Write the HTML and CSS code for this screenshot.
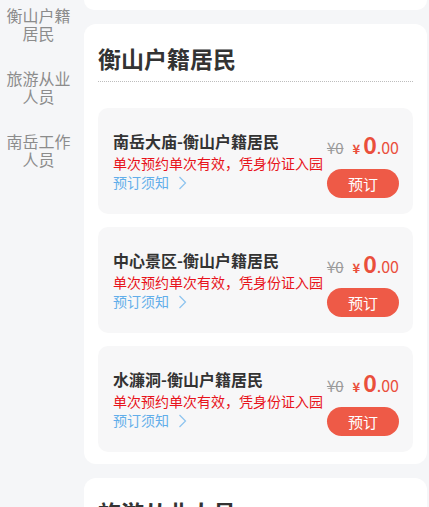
FILE: index.html
```html
<!DOCTYPE html>
<html lang="zh-CN">
<head>
    <meta charset="UTF-8">
    <meta name="viewport" content="width=device-width, initial-scale=1.0">
    <title>门票预约</title>
    <link rel="stylesheet" href="styles.css">
</head>
<body>
    <aside class="side">
        <div class="side-item">衡山户籍居民</div>
        <div class="side-item">旅游从业人员</div>
        <div class="side-item">南岳工作人员</div>
    </aside>

    <main class="main">
        <div class="group group-tail"></div>

        <section class="group">
            <h2 class="group-title">衡山户籍居民</h2>

            <div class="ticket">
                <div class="ticket-info">
                    <div class="ticket-name">南岳大庙-衡山户籍居民</div>
                    <div class="ticket-tip">单次预约单次有效，凭身份证入园</div>
                    <div class="ticket-notice">预订须知
                        <svg width="9" height="14" viewBox="0 0 9 14"><path d="M1.5 1 L7.5 7 L1.5 13" fill="none" stroke="#8cc3ef" stroke-width="1.2"/></svg>
                    </div>
                </div>
                <div class="ticket-buy">
                    <div class="price">
                        <span class="price-old">¥0</span>
                        <span class="price-sign">¥</span><span class="price-int">0</span><span class="price-dec">.00</span>
                    </div>
                    <button class="btn-book">预订</button>
                </div>
            </div>

            <div class="ticket">
                <div class="ticket-info">
                    <div class="ticket-name">中心景区-衡山户籍居民</div>
                    <div class="ticket-tip">单次预约单次有效，凭身份证入园</div>
                    <div class="ticket-notice">预订须知
                        <svg width="9" height="14" viewBox="0 0 9 14"><path d="M1.5 1 L7.5 7 L1.5 13" fill="none" stroke="#8cc3ef" stroke-width="1.2"/></svg>
                    </div>
                </div>
                <div class="ticket-buy">
                    <div class="price">
                        <span class="price-old">¥0</span>
                        <span class="price-sign">¥</span><span class="price-int">0</span><span class="price-dec">.00</span>
                    </div>
                    <button class="btn-book">预订</button>
                </div>
            </div>

            <div class="ticket">
                <div class="ticket-info">
                    <div class="ticket-name">水濂洞-衡山户籍居民</div>
                    <div class="ticket-tip">单次预约单次有效，凭身份证入园</div>
                    <div class="ticket-notice">预订须知
                        <svg width="9" height="14" viewBox="0 0 9 14"><path d="M1.5 1 L7.5 7 L1.5 13" fill="none" stroke="#8cc3ef" stroke-width="1.2"/></svg>
                    </div>
                </div>
                <div class="ticket-buy">
                    <div class="price">
                        <span class="price-old">¥0</span>
                        <span class="price-sign">¥</span><span class="price-int">0</span><span class="price-dec">.00</span>
                    </div>
                    <button class="btn-book">预订</button>
                </div>
            </div>
        </section>

        <section class="group">
            <h2 class="group-title">旅游从业人员</h2>
        </section>
    </main>
</body>
</html>
```

FILE: styles.css
```css
/* General */
* {
    margin: 0;
    padding: 0;
    box-sizing: border-box;
}

body {
    display: flex;
    height: 507px;
    overflow: hidden;
    background-color: #f5f6f8;
    font-family: "Noto Sans CJK SC", "Noto Sans", sans-serif;
    color: #333;
}

/* Left menu */
.side {
    width: 77px;
    flex-shrink: 0;
    margin-top: -8px;
}

.side-item {
    padding: 14px 6px 13px;
    font-size: 16px;
    line-height: 18px;
    color: #8c8c8c;
    text-align: center;
}

/* Right list */
.main {
    flex: 1;
    margin-left: 7px;
    margin-right: 2px;
    display: flex;
    flex-direction: column;
    gap: 14px;
}

.group {
    flex-shrink: 0;
    background-color: #fff;
    border-radius: 12px;
    padding: 19px 14px 12px;
}

.group-tail {
    height: 10px;
    padding: 0;
    border-radius: 0 0 12px 12px;
}

.group-title {
    font-size: 23px;
    line-height: 30px;
    font-weight: bold;
    color: #333;
    padding-bottom: 8px;
    border-bottom: 1px dotted #bdbdbd;
    margin-bottom: 26px;
}

/* Ticket card */
.ticket {
    display: flex;
    justify-content: space-between;
    height: 106px;
    padding: 23px 14px 0 15px;
    background-color: #f7f7f8;
    border-radius: 10px;
    margin-bottom: 13px;
}

.ticket:last-child {
    margin-bottom: 0;
}

.ticket-name {
    font-size: 16px;
    line-height: 20px;
    font-weight: bold;
    color: #333;
}

.ticket-tip {
    font-size: 14px;
    line-height: 20px;
    margin-top: 2px;
    color: #e8131b;
}

.ticket-notice {
    display: flex;
    align-items: center;
    gap: 9px;
    font-size: 14px;
    line-height: 19px;
    color: #62aeea;
}

.ticket-buy {
    display: flex;
    flex-direction: column;
    align-items: flex-end;
    padding-top: 1px;
}

.price {
    display: flex;
    align-items: baseline;
    height: 24px;
    margin-top: -5px;
    color: #ea4f3c;
}

.price-old {
    font-size: 15px;
    color: #9a9a9a;
    text-decoration: line-through;
    margin-right: 9px;
}

.price-sign {
    font-size: 13px;
    font-weight: bold;
    margin-right: 3px;
}

.price-int {
    font-size: 23px;
    font-weight: bold;
}

.price-dec {
    font-size: 16px;
}

.btn-book {
    margin-top: 18px;
    width: 72px;
    height: 29px;
    border: none;
    border-radius: 15px;
    background-color: #ee5a47;
    color: #fff;
    font-family: inherit;
    font-size: 15px;
}
```
